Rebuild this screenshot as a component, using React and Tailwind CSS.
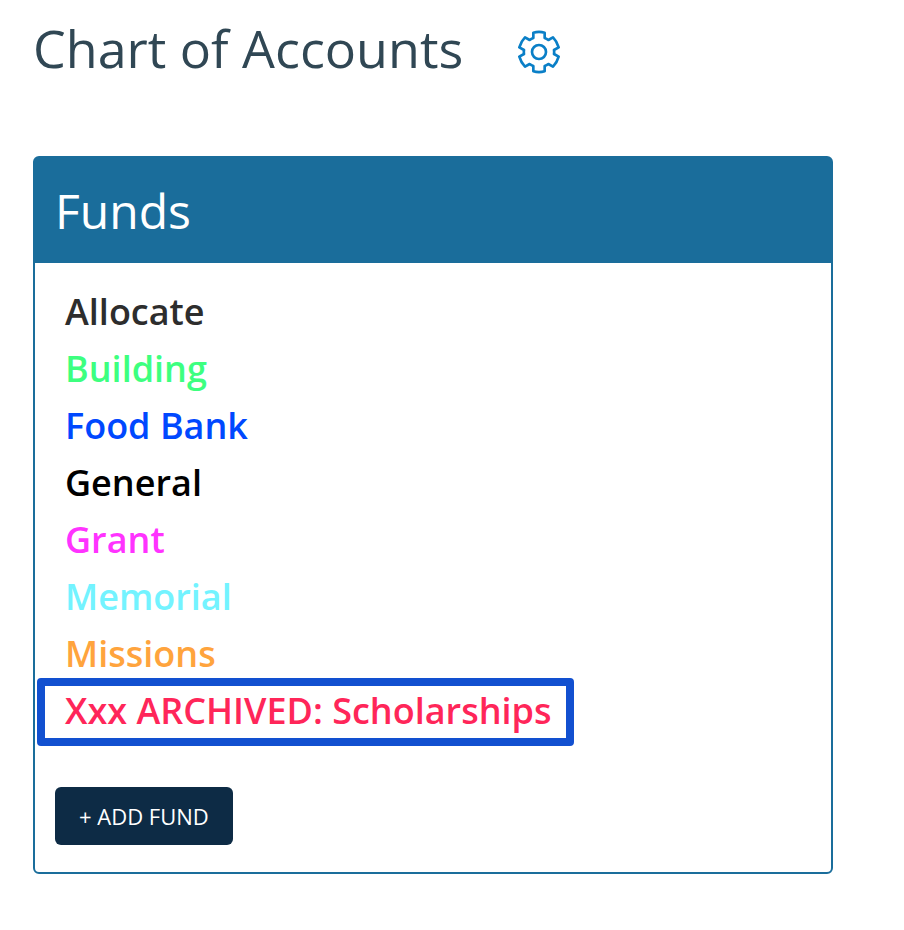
import clsx from 'clsx';

const funds = [
  { name: 'Allocate', color: 'text-[#2d2d2d]' },
  { name: 'Building', color: 'text-[#3dff7f]' },
  { name: 'Food Bank', color: 'text-[#0048ff]' },
  { name: 'General', color: 'text-black' },
  { name: 'Grant', color: 'text-[#ff33ff]' },
  { name: 'Memorial', color: 'text-[#73f3ff]' },
  { name: 'Missions', color: 'text-[#ffa43d]' },
  { name: 'Xxx ARCHIVED: Scholarships', color: 'text-[#ff2659]', highlighted: true },
];

function GearIcon() {
  return (
    <svg viewBox="-66 -66 132 132" className="w-11 h-11" fill="none" stroke="currentColor" strokeWidth="8" strokeLinejoin="round" aria-hidden="true">
      <path d="M-17 -42V-58Q0 -63 17 -58V-42Q23 -40 28 -36L42 -44Q54 -32 59 -14L45 -6Q46 0 45 6L59 14Q54 32 42 44L28 36Q23 40 17 42V58Q0 63 -17 58V42Q-23 40 -28 36L-42 44Q-54 32 -59 14L-45 6Q-46 0 -45 -6L-59 -14Q-54 -32 -42 -44L-28 -36Q-23 -40 -17 -42Z" />
      <circle r="21" />
    </svg>
  );
}

export default function App() {
  return (
    <main className="min-h-screen bg-white pl-[33px] pr-[71px] pt-[10px] pb-14 font-['Open_Sans',sans-serif]">
      <header className="flex items-center gap-[54px]">
        <h1 className="text-[52px] leading-[76px] text-[#304754]">Chart of Accounts</h1>
        <button type="button" aria-label="Settings" className="pt-2 text-[#0a7fc7]">
          <GearIcon />
        </button>
      </header>

      <section className="mt-[70px] rounded-md border-2 border-[#1a6d9b] bg-white">
        <h2 className="bg-[#1a6d9b] px-5 py-4 text-5xl leading-[73px] text-white">Funds</h2>

        <div className="px-5 pt-5 pb-[27px]">
          <ul className="px-[10px]">
            {funds.map((fund) => (
              <li key={fund.name} className="text-4xl leading-[57px] font-semibold">
                <a href="#" className={clsx('relative inline-block', fund.color)}>
                  {fund.name}
                  {/* Marker around the archived fund */}
                  {fund.highlighted && (
                    <span className="absolute -left-7 -right-[22px] -top-1 -bottom-[7px] rounded border-8 border-[#1250d0]" />
                  )}
                </a>
              </li>
            ))}
          </ul>

          <button type="button" className="mt-12 h-[58px] rounded-md bg-[#0d2b45] px-6 text-[22px] text-white">
            + ADD FUND
          </button>
        </div>
      </section>
    </main>
  );
}
